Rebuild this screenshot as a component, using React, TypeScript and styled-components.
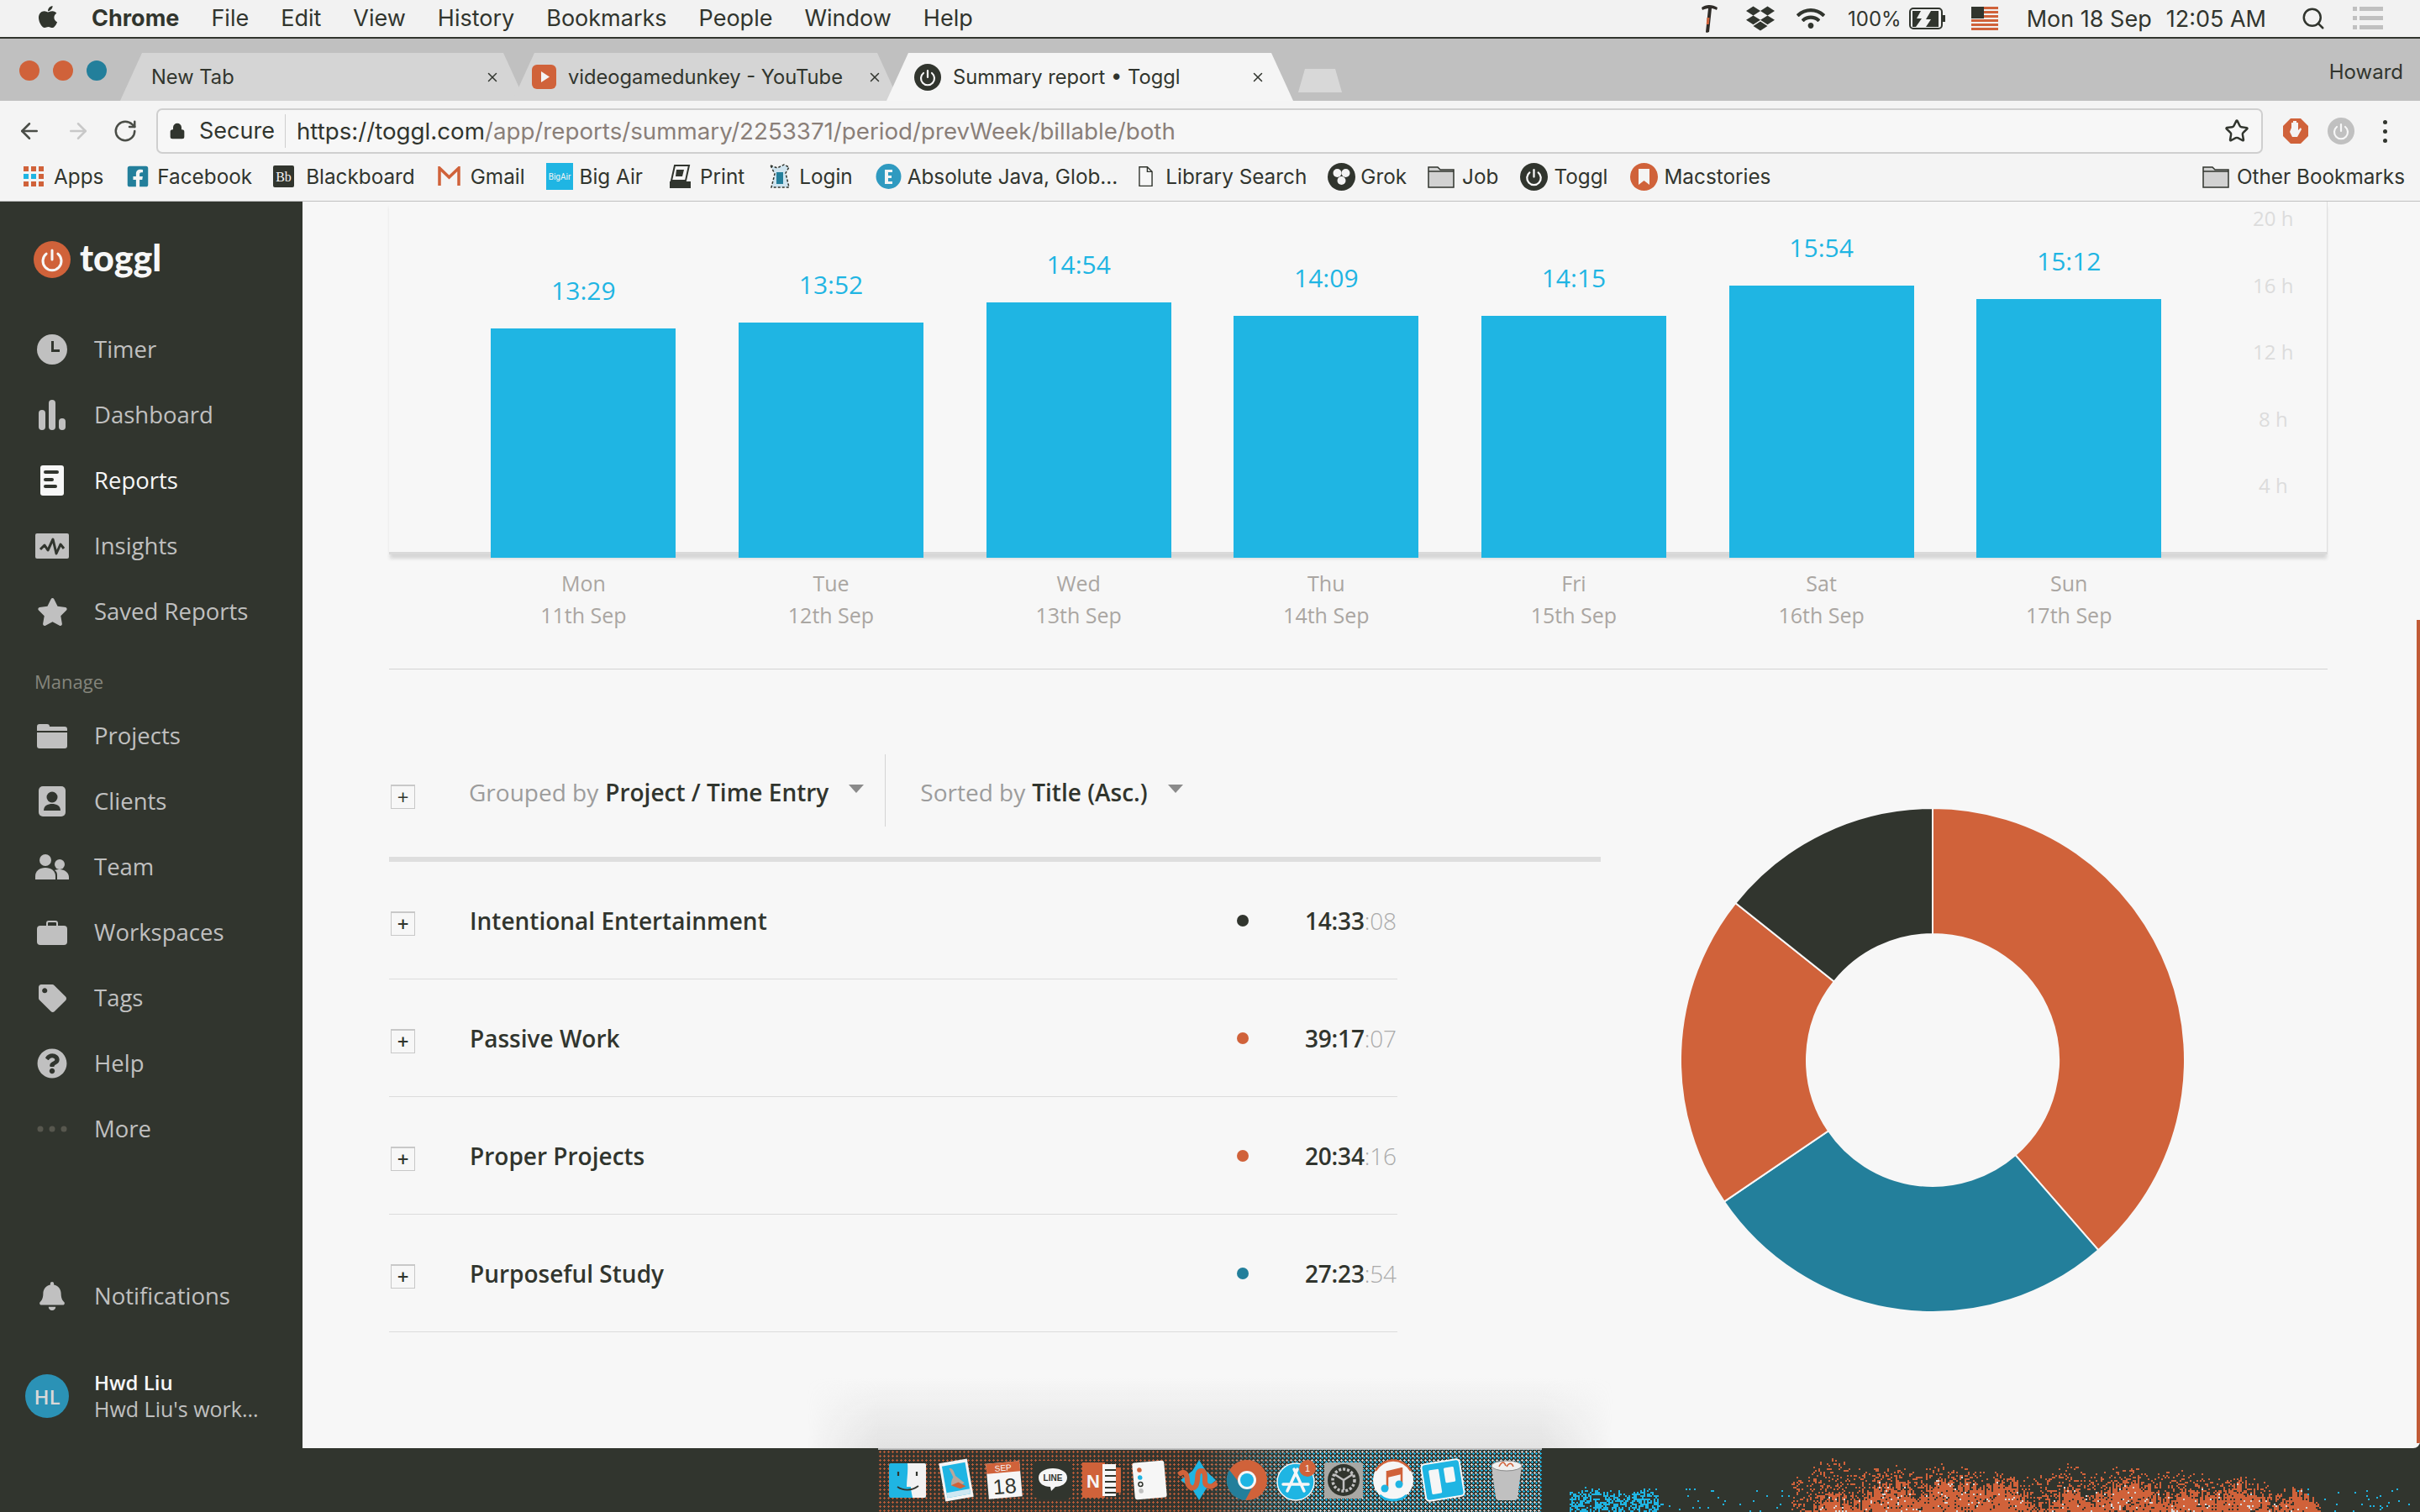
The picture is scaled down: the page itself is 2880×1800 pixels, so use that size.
import React from "react";
import styled, { createGlobalStyle } from "styled-components";
import {
  FaApple, FaBell, FaDropbox, FaFacebookSquare, FaQuestionCircle, FaStar, FaTag, FaWifi,
} from "react-icons/fa";
import { ArrowLeft, ArrowRight, Lock, RotateCw, Search, Star, X } from "lucide-react";

const DARK = "#31352e";
const ORANGE = "#d0623a";
const BLUE = "#1fb5e3";
const TEAL = "#237f9b";
const GREY = "#c0c0c0";
const PAPER = "#f7f7f7";

const GlobalStyle = createGlobalStyle`
  html, body { margin: 0; padding: 0; background: ${DARK}; }
  * { box-sizing: border-box; }
`;

const Screen = styled.div`
  width: 2880px;
  height: 1800px;
  display: flex;
  flex-direction: column;
  overflow: hidden;
  font-family: "Open Sans", sans-serif;
  background: ${DARK};
`;

/* ---- mac menu bar ---- */
const MenuBar = styled.div`
  height: 46px;
  flex: none;
  display: flex;
  align-items: center;
  background: #f2f2f2;
  border-bottom: 2px solid ${DARK};
  padding: 0 0 0 42px;
  font-family: Inter, sans-serif;
  font-size: 27px;
  color: ${DARK};
`;
const MenuItem = styled.span<{ $bold?: boolean }>`
  margin-right: 38px;
  font-weight: ${(p) => (p.$bold ? 700 : 400)};
  line-height: 44px;
`;
const AppleMark = styled.span`
  display: flex;
  width: 67px;
  font-size: 30px;
  margin-top: -4px;
`;
const Status = styled.div`
  margin-left: auto;
  display: flex;
  align-items: center;
  height: 44px;
  padding-right: 44px;
`;
const StatusIcon = styled.span<{ $gap: number }>`
  display: flex;
  align-items: center;
  margin-right: ${(p) => p.$gap}px;
`;
const StatusText = styled.span<{ $gap: number; $size?: number }>`
  margin-right: ${(p) => p.$gap}px;
  font-size: ${(p) => p.$size ?? 27}px;
  white-space: nowrap;
`;

/* ---- chrome tabs ---- */
const TabStrip = styled.div`
  height: 74px;
  flex: none;
  display: flex;
  align-items: flex-end;
  background: ${GREY};
  position: relative;
`;
const Lights = styled.div`
  width: 143px;
  height: 100%;
  flex: none;
  display: flex;
  align-items: center;
  gap: 16px;
  padding: 2px 0 0 23px;
`;
const Light = styled.span<{ $color: string }>`
  width: 24px;
  height: 24px;
  border-radius: 50%;
  background: ${(p) => p.$color};
`;
const Tab = styled.div<{ $width: number; $active?: boolean; $left: number; $right: number }>`
  width: ${(p) => p.$width}px;
  height: 57px;
  flex: none;
  display: flex;
  align-items: center;
  margin-right: -15px;
  padding: 0 ${(p) => p.$right}px 0 ${(p) => p.$left}px;
  background: ${(p) => (p.$active ? "#f5f5f5" : "#d5d5d5")};
  clip-path: polygon(26px 0, calc(100% - 26px) 0, 100% 100%, 0 100%);
  font-family: Inter, sans-serif;
  font-size: 23.7px;
  color: ${DARK};
  position: relative;
  z-index: ${(p) => (p.$active ? 2 : 1)};
`;
const TabTitle = styled.span`
  flex: 1;
  margin-left: 14px;
  white-space: nowrap;
`;
const PlainTabTitle = styled(TabTitle)`
  margin-left: 0;
`;
const NewTab = styled.div`
  width: 52px;
  height: 28px;
  margin: 0 0 10px 21px;
  background: #d8d8d8;
  clip-path: polygon(8px 0, calc(100% - 8px) 0, 100% 100%, 0 100%);
  flex: none;
`;
const Profile = styled.span`
  margin: 0 20px 20px auto;
  font-family: Inter, sans-serif;
  font-size: 24px;
  color: ${DARK};
`;

/* ---- address row ---- */
const AddressRow = styled.div`
  height: 63px;
  flex: none;
  display: flex;
  align-items: flex-start;
  background: #f4f4f4;
  padding: 9px 0 0 20px;
  color: ${DARK};
`;
const NavButton = styled.span<{ $muted?: boolean; $gap: number }>`
  height: 54px;
  display: flex;
  align-items: center;
  margin-right: ${(p) => p.$gap}px;
  color: ${(p) => (p.$muted ? "#c8c8c8" : "#4a4d47")};
`;
const AddressBar = styled.div`
  flex: 1;
  height: 54px;
  display: flex;
  align-items: center;
  background: ${PAPER};
  border: 2px solid #cfcfcf;
  border-radius: 7px;
  padding: 0 14px 0 13px;
  font-family: Inter, sans-serif;
  font-size: 27px;
`;
const SecureLabel = styled.span`
  margin-left: 16px;
  padding-right: 12px;
  border-right: 1px solid #cfcfcf;
  line-height: 40px;
`;
const Url = styled.span`
  margin-left: 13px;
  flex: 1;
  font-size: 27.7px;
  white-space: nowrap;
  color: #8a7f79;
`;
const UrlHost = styled.span`
  color: ${DARK};
`;
const Extensions = styled.div`
  width: 187px;
  height: 54px;
  flex: none;
  display: flex;
  align-items: center;
  padding-left: 23px;
  gap: 22px;
`;
const Kebab = styled.span`
  display: flex;
  flex-direction: column;
  gap: 6px;
  margin-left: 12px;
`;
const KebabDot = styled.span`
  width: 5px;
  height: 5px;
  border-radius: 50%;
  background: ${DARK};
`;

/* ---- bookmarks ---- */
const BookmarkRow = styled.div`
  height: 57px;
  flex: none;
  display: flex;
  align-items: center;
  background: #f4f4f4;
  border-bottom: 1px solid ${GREY};
  padding: 0 18px 2px 28px;
  font-family: Inter, sans-serif;
  font-size: 24.3px;
  color: ${DARK};
`;
const Bookmark = styled.span<{ $gap: number; $icon: number; $push?: boolean }>`
  display: flex;
  align-items: center;
  gap: ${(p) => p.$icon}px;
  margin-right: ${(p) => p.$gap}px;
  margin-left: ${(p) => (p.$push ? "auto" : 0)};
  white-space: nowrap;
`;

/* ---- page body ---- */
const Body = styled.div`
  flex: 1;
  display: flex;
  min-height: 0;
`;
const Sidebar = styled.aside`
  width: 360px;
  flex: none;
  display: flex;
  flex-direction: column;
  background: ${DARK};
  padding-bottom: 107px;
`;
const Logo = styled.div`
  display: flex;
  align-items: center;
  height: 44px;
  margin: 47px 0 46px 40px;
  gap: 11px;
`;
const LogoWord = styled.span`
  font-family: Lato, sans-serif;
  font-weight: 900;
  font-size: 43px;
  line-height: 44px;
  color: ${PAPER};
  margin-top: -5px;
`;
const NavRow = styled.div<{ $active?: boolean }>`
  height: 78px;
  flex: none;
  display: flex;
  align-items: center;
  padding-left: 42px;
  font-size: 27.5px;
  color: ${(p) => (p.$active ? PAPER : GREY)};
`;
const NavIcon = styled.span<{ $muted?: boolean }>`
  width: 40px;
  height: 40px;
  flex: none;
  display: flex;
  align-items: center;
  justify-content: center;
  margin-right: 30px;
  color: ${(p) => (p.$muted ? "#57574e" : "inherit")};
`;
const NavText = styled.span`
  margin-top: -2px;
`;
const ManageLabel = styled.div`
  padding: 32px 0 14px 41px;
  font-size: 22px;
  line-height: 24px;
  color: #85857c;
`;
const NotifyRow = styled(NavRow)`
  margin-top: auto;
  margin-bottom: 49px;
`;
const UserRow = styled.div`
  display: flex;
  align-items: center;
  height: 62px;
  padding-left: 30px;
  gap: 30px;
`;
const Avatar = styled.span`
  width: 52px;
  height: 52px;
  border-radius: 50%;
  background: #2b92b6;
  color: #d8d8d8;
  font-size: 24px;
  font-weight: 600;
  display: flex;
  align-items: center;
  justify-content: center;
  flex: none;
`;
const UserText = styled.div`
  margin-top: -3px;
`;
const UserName = styled.div`
  font-size: 24px;
  font-weight: 600;
  line-height: 32px;
  color: ${PAPER};
`;
const UserWork = styled.div`
  font-size: 25px;
  line-height: 30px;
  color: ${GREY};
  white-space: nowrap;
`;

const Main = styled.main`
  flex: 1;
  display: flex;
  flex-direction: column;
  min-width: 0;
`;
const Content = styled.div`
  height: 1484px;
  flex: none;
  background: ${PAPER};
  padding: 0 110px 0 103px;
  position: relative;
  overflow: hidden;
  border-bottom-right-radius: 8px;
`;
const ScrollMark = styled.div`
  position: absolute;
  right: 0;
  top: 498px;
  bottom: 6px;
  width: 4px;
  background: #c15b36;
`;
const DockShadow = styled.div`
  position: absolute;
  left: 600px;
  bottom: 0;
  width: 960px;
  height: 84px;
  background: linear-gradient(to bottom, rgba(200, 200, 200, 0), rgba(200, 200, 200, 0.42));
  mask-image: linear-gradient(to right, transparent, #000 9%, #000 91%, transparent);
`;

/* ---- chart ---- */
const Plot = styled.div`
  height: 420px;
  display: flex;
  align-items: flex-end;
  padding-left: 84px;
  border-right: 1px solid #dedede;
  box-shadow: inset 0 -3px 0 #dadada, 0 6px 4px -1px #d6d6d6;
`;
const BarColumn = styled.div`
  width: 294.67px;
  flex: none;
  display: flex;
  flex-direction: column;
  align-items: center;
  margin-bottom: -4px;
`;
const BarValue = styled.div`
  height: 40px;
  margin-bottom: 25px;
  font-size: 30px;
  line-height: 40px;
  color: ${BLUE};
`;
const Bar = styled.div<{ $height: number }>`
  width: 220px;
  height: ${(p) => p.$height}px;
  background: ${BLUE};
  position: relative;
`;
const AxisLabels = styled.div`
  align-self: flex-start;
  flex: 1;
  padding: 8px 12px 0 0;
  display: flex;
  flex-direction: column;
  align-items: center;
  gap: 55.5px;
  font-size: 24px;
  line-height: 24px;
  color: #dcdcdc;
`;
const AxisText = styled.span`
  margin-left: 44px;
`;
const DayRow = styled.div`
  display: flex;
  padding: 15px 0 0 84px;
  margin-bottom: 45px;
`;
const Day = styled.div`
  width: 294.67px;
  flex: none;
  text-align: center;
  font-size: 25px;
  line-height: 38px;
  color: #aaa6a2;
`;
const Rule = styled.div`
  height: 1px;
  background: #d4d4d4;
`;

/* ---- summary list ---- */
const Lower = styled.div`
  display: flex;
  align-items: flex-start;
`;
const ListColumn = styled.div`
  width: 1442px;
  flex: none;
  padding-top: 101px;
`;
const ListHead = styled.div`
  display: flex;
  align-items: flex-start;
  height: 128px;
  padding-bottom: 36px;
  border-bottom: 6px solid #dedede;
  font-size: 28px;
  color: #9c9c9c;
`;
const PlusBox = styled.span`
  width: 29px;
  height: 29px;
  flex: none;
  display: flex;
  align-items: center;
  justify-content: center;
  margin-left: 2px;
  border: 1px solid #c8c8c8;
  border-top-width: 2px;
  font-size: 24px;
  line-height: 24px;
  color: ${DARK};
`;
const HeadBox = styled(PlusBox)`
  margin-top: 36px;
`;
const Sorter = styled.div<{ $first?: boolean }>`
  height: 86px;
  display: flex;
  align-items: center;
  padding: 3px ${(p) => (p.$first ? 25 : 0)}px 0 ${(p) => (p.$first ? 64 : 41)}px;
  border-right: ${(p) => (p.$first ? "1px solid #d4d4d4" : "0")};
  white-space: nowrap;
`;
const SortValue = styled.strong`
  font-weight: 600;
  color: ${DARK};
  margin-left: 8px;
`;
const Caret = styled.span`
  width: 0;
  height: 0;
  margin: -8px 0 0 24px;
  border-left: 9px solid transparent;
  border-right: 9px solid transparent;
  border-top: 10px solid #8b8b8b;
`;
const Row = styled.div`
  width: 1200px;
  height: 140px;
  display: flex;
  align-items: center;
  border-bottom: 1px solid #dcdcdc;
  padding-top: 1px;
  font-size: 28px;
  font-weight: 600;
  color: ${DARK};
`;
const RowBox = styled(PlusBox)`
  margin-top: 6px;
`;
const RowTitle = styled.span`
  flex: 1;
  margin-left: 65px;
`;
const Dot = styled.span<{ $color: string }>`
  width: 14px;
  height: 14px;
  border-radius: 50%;
  background: ${(p) => p.$color};
  margin-right: 67px;
`;
const Time = styled.span`
  width: 110px;
  font-size: 28px;
  letter-spacing: -0.2px;
  white-space: nowrap;
`;
const Seconds = styled.span`
  font-weight: 300;
  color: #aaaaaa;
`;
const DonutWrap = styled.div`
  margin: 163px 0 0 93px;
  line-height: 0;
`;

/* ---- dock ---- */
const DockArea = styled.div`
  flex: 1;
  display: flex;
  background: ${DARK};
  min-height: 0;
`;
const Dock = styled.div`
  width: 790px;
  margin-left: 685px;
  flex: none;
  display: flex;
  align-items: flex-start;
  gap: 11.7px;
  padding: 11px 0 0 12px;
  border-top: 2px solid ${GREY};
  background-color: #34352e;
  background-image: radial-gradient(rgba(208, 98, 58, 0.85) 1px, transparent 1.2px);
  background-size: 5px 5px;
  position: relative;
  isolation: isolate;

  &::before {
    content: "";
    position: absolute;
    inset: 0 0 0 48%;
    z-index: -1;
    background-color: #33362f;
    background-image:
      radial-gradient(#d8d8d8 1px, transparent 1.2px),
      radial-gradient(${BLUE} 1px, transparent 1.2px);
    background-size: 5px 5px, 5px 5px;
    background-position: 0 0, 2px 2px;
    mask-image: linear-gradient(to right, transparent, #000 35%);
  }
`;
const TrashSlot = styled.span`
  margin-left: 25px;
`;
const WallpaperWrap = styled.div`
  margin-left: 25px;
  line-height: 0;
`;

const Bars = [
  { value: "13:29", height: 273, day: "Mon", date: "11th Sep" },
  { value: "13:52", height: 280, day: "Tue", date: "12th Sep" },
  { value: "14:54", height: 304, day: "Wed", date: "13th Sep" },
  { value: "14:09", height: 288, day: "Thu", date: "14th Sep" },
  { value: "14:15", height: 288, day: "Fri", date: "15th Sep" },
  { value: "15:54", height: 324, day: "Sat", date: "16th Sep" },
  { value: "15:12", height: 308, day: "Sun", date: "17th Sep" },
];

const Projects = [
  { name: "Intentional Entertainment", color: DARK, time: "14:33", sec: ":08" },
  { name: "Passive Work", color: ORANGE, time: "39:17", sec: ":07" },
  { name: "Proper Projects", color: ORANGE, time: "20:34", sec: ":16" },
  { name: "Purposeful Study", color: TEAL, time: "27:23", sec: ":54" },
];

// clockwise from the top, same order as the toggl pie
const Slices = [
  { hours: 39.285, color: ORANGE },
  { hours: 27.398, color: TEAL },
  { hours: 20.571, color: ORANGE },
  { hours: 14.552, color: DARK },
];

const polar = (r: number, deg: number) => {
  const a = (deg * Math.PI) / 180;
  return `${(302 + r * Math.sin(a)).toFixed(2)} ${(302 - r * Math.cos(a)).toFixed(2)}`;
};

const Donut = () => {
  const total = Slices.reduce((s, x) => s + x.hours, 0);
  let start = 0;
  return (
    <svg width="604" height="604" viewBox="0 0 604 604">
      {Slices.map((s) => {
        const end = start + (s.hours / total) * 360;
        const large = end - start > 180 ? 1 : 0;
        const d = `M${polar(300, start)}A300 300 0 ${large} 1 ${polar(300, end)}L${polar(150, end)}A150 150 0 ${large} 0 ${polar(150, start)}Z`;
        start = end;
        return <path key={s.hours} d={d} fill={s.color} stroke={PAPER} strokeWidth="2" />;
      })}
    </svg>
  );
};

const lerp = (pts: number[][], x: number) => {
  for (let i = 1; i < pts.length; i++) {
    if (x <= pts[i][0]) {
      const [x0, y0] = pts[i - 1];
      const [x1, y1] = pts[i];
      return y0 + ((y1 - y0) * (x - x0)) / (x1 - x0);
    }
  }
  return 999;
};

const SOLID = [[510, 215], [580, 170], [640, 145], [700, 150], [760, 140], [840, 150], [880, 205], [950, 190], [1000, 160], [1080, 140], [1120, 190], [1200, 170], [1240, 150], [1280, 200], [1350, 180], [1390, 230]];
const SPARSE = [[440, 100], [530, 65], [600, 90], [680, 75], [780, 95], [830, 120], [880, 110], [930, 90], [1010, 85], [1100, 95], [1180, 115], [1240, 125], [1340, 155], [1390, 210]];

const Wallpaper = () => {
  // flames in the desktop picture, sampled on a 2px grid like the dithered original
  let seed = 23;
  const rnd = () => {
    seed = (seed * 16807) % 2147483647;
    return seed / 2147483647;
  };
  let orange = "";
  let blue = "";
  let pale = "";
  for (let x = 0; x < 1020; x += 2) {
    const zx = (x + 20) * 1.508;
    const wobble = (rnd() - 0.5) * 60 + 22 * Math.sin(zx / 17);
    for (let y = 0; y < 76; y += 2) {
      const zy = (y + 4) * 3;
      const cell = `M${x} ${y}h2v2h-2z`;
      const inOrange = zx > 440 && zx < 1390;
      if (inOrange && zy > lerp(SOLID, zx) + wobble) {
        const r = rnd();
        if (r < 0.05) pale += cell;
        else if (r < 0.9) orange += cell;
      } else if (inOrange && zy > lerp(SPARSE, zx) + wobble * 0.5) {
        if (rnd() < 0.24) orange += cell;
      } else if (zx > 40 && zx < 200 && zy > 165 + wobble * 0.4) {
        if (rnd() < 0.55) blue += cell;
      } else if (((zx >= 200 && zx < 440) || zx >= 1280) && zy > 150) {
        if (rnd() < 0.035) blue += cell;
      }
    }
  }
  return (
    <svg width="1020" height="76" viewBox="0 0 1020 76">
      <path d={blue} fill={BLUE} />
      <path d={orange} fill={ORANGE} />
      <path d={pale} fill="#d8d8d8" />
    </svg>
  );
};

const PowerGlyph = ({ size, bg, fg }: { size: number; bg: string; fg: string }) => (
  <svg width={size} height={size} viewBox="0 0 32 32">
    <circle cx="16" cy="16" r="16" fill={bg} />
    <path d="M11 11a8 8 0 1 0 10 0" fill="none" stroke={fg} strokeWidth="2.2" strokeLinecap="round" />
    <path d="M16 8v8" stroke={fg} strokeWidth="2.2" strokeLinecap="round" />
  </svg>
);

const Hammer = () => (
  <svg width="22" height="34" viewBox="0 0 22 34">
    <path d="M2 4C7 0 15 0 21 4l-1 3c-2-1-4-2-6-2l-3 28-3 1-1-1 3-28C8 5 5 6 3 7Z" fill="#2f2c28" />
    <path d="M8.500 16h3l-.8 8h-3Z" fill={ORANGE} />
  </svg>
);

const Battery = () => (
  <svg width="44" height="26" viewBox="0 0 44 26">
    <rect x="1" y="1" width="38" height="24" rx="4" fill="none" stroke={DARK} strokeWidth="2" />
    <rect x="40" y="9" width="3" height="8" fill={DARK} />
    <path d="M4 4h10L9 13h6l-7 10H4ZM20 4h15v19H20l6-9h-6l6-10Z" fill={DARK} />
  </svg>
);

const Flag = () => (
  <svg width="32" height="28" viewBox="0 0 32 28">
    <rect width="32" height="28" fill="#f1f1f1" />
    {[0, 5, 10, 15, 20, 25].map((y) => (
      <rect key={y} y={y} width="32" height="3" fill={ORANGE} />
    ))}
    <rect width="15" height="14" fill={DARK} />
  </svg>
);

const ListLines = () => (
  <svg width="36" height="32" viewBox="0 0 36 32" fill={GREY}>
    <rect x="0" y="2" width="5" height="5" />
    <rect x="0" y="13" width="5" height="5" />
    <rect x="0" y="24" width="5" height="5" />
    <rect x="8" y="2" width="28" height="5" />
    <rect x="8" y="13" width="28" height="5" />
    <rect x="8" y="24" width="28" height="5" />
  </svg>
);

const StopHand = () => (
  <svg width="32" height="32" viewBox="0 0 32 32">
    <path d="M10 1h12l9 9v12l-9 9H10l-9-9V10Z" fill={ORANGE} />
    <path d="M11 12V6h2v6-8h2v8-8h2v8-6h2v9l3-3 1 2-5 9h-6l-3-6Z" fill="#f4f4f4" />
  </svg>
);

const YoutubeIcon = () => (
  <svg width="29" height="29" viewBox="0 0 29 29">
    <rect width="29" height="29" rx="6" fill={ORANGE} />
    <path d="M11 8l10 6.500-10 6.500Z" fill="#f4f4f4" />
  </svg>
);

const AppsGrid = () => (
  <svg width="24" height="24" viewBox="0 0 24 24">
    {[0, 9, 18].map((y) =>
      [0, 9, 18].map((x) => (
        <rect key={`${x}-${y}`} x={x} y={y} width="6" height="6" fill={y === 9 && x !== 18 ? BLUE : ORANGE} />
      )),
    )}
  </svg>
);

const FolderIcon = () => (
  <svg width="32" height="28" viewBox="0 0 32 28">
    <path d="M1 3h11l3 3h16v21H1Z" fill="#d2d2d2" stroke={DARK} strokeWidth="1.500" />
    <path d="M1 8h30" stroke={DARK} strokeWidth="1.500" />
  </svg>
);

const GmailIcon = () => (
  <svg width="27" height="24" viewBox="0 0 27 24">
    <path d="M2 23V2l11.500 11L25 2v21" fill="none" stroke={ORANGE} strokeWidth="3.500" />
  </svg>
);

const BlackboardIcon = () => (
  <svg width="25" height="26" viewBox="0 0 25 26">
    <rect width="25" height="26" rx="2" fill={DARK} />
    <text x="12.500" y="19" fontSize="16" fontFamily="Liberation Serif, serif" fill="#f4f4f4" textAnchor="middle">Bb</text>
  </svg>
);

const BigAirIcon = () => (
  <svg width="32" height="32" viewBox="0 0 32 32">
    <rect width="32" height="32" fill={BLUE} />
    <text x="16" y="20" fontSize="10" fontFamily="Roboto, sans-serif" fill="#f4f4f4" textAnchor="middle">BigAir</text>
  </svg>
);

const PrintIcon = () => (
  <svg width="27" height="30" viewBox="0 0 27 30">
    <path d="M7 2h17l-4 18H3Z" fill="#f4f4f4" stroke={DARK} strokeWidth="2" />
    <path d="M9 7h9l-2 8H8Z" fill={DARK} />
    <path d="M1 21h25v8H1Z" fill={DARK} />
  </svg>
);

const LoginIcon = () => (
  <svg width="30" height="32" viewBox="0 0 30 32">
    <path d="M4 3l8 3 8-4 6 3-4 7 4 17H5l4-16Z" fill="#cfe4ef" stroke={DARK} strokeWidth="1.500" strokeDasharray="3 2" />
    <path d="M11 11h8v14h-8Z" fill={TEAL} />
  </svg>
);

const AbsoluteIcon = () => (
  <svg width="31" height="32" viewBox="0 0 31 32">
    <circle cx="15.500" cy="16" r="15" fill="#2f9ac0" />
    <path d="M11 8h9v3h-5v4h4v3h-4v4h5v3h-9Z" fill="#f4f4f4" />
  </svg>
);

const DocIcon = () => (
  <svg width="17" height="26" viewBox="0 0 18 26">
    <path d="M1 1h10l6 6v18H1Z M11 1v6h6" fill="#f7f7f7" stroke={DARK} strokeWidth="1.500" />
  </svg>
);

const GrokIcon = () => (
  <svg width="33" height="33" viewBox="0 0 33 33">
    <circle cx="16.500" cy="16.500" r="16.500" fill={DARK} />
    <circle cx="11.500" cy="12" r="5" fill="#f4f4f4" />
    <circle cx="21.500" cy="12" r="5" fill="#f4f4f4" />
    <circle cx="16.500" cy="21" r="5" fill="#f4f4f4" />
  </svg>
);

const MacstoriesIcon = () => (
  <svg width="33" height="33" viewBox="0 0 33 33">
    <circle cx="16.500" cy="16.500" r="16.500" fill={ORANGE} />
    <path d="M10 7h13v19l-6.500-5-6.500 5Z" fill="#f4f4f4" />
  </svg>
);

const ClockIcon = () => (
  <svg width="36" height="36" viewBox="0 0 36 36">
    <circle cx="18" cy="18" r="18" fill={GREY} />
    <path d="M17 8h3v10h7v3H17Z" fill={DARK} />
  </svg>
);

const DashIcon = () => (
  <svg width="34" height="36" viewBox="0 0 34 36" fill={GREY}>
    <rect x="1" y="12" width="8" height="24" rx="4" />
    <rect x="13" y="0" width="8" height="36" rx="4" />
    <rect x="25" y="22" width="8" height="14" rx="4" />
  </svg>
);

const ReportIcon = () => (
  <svg width="28" height="36" viewBox="0 0 28 36">
    <rect width="28" height="36" rx="3" fill={PAPER} />
    <rect x="4" y="6" width="18" height="4" rx="2" fill={DARK} />
    <rect x="4" y="15" width="12" height="4" rx="2" fill={DARK} />
    <rect x="4" y="23" width="16" height="4" rx="2" fill={DARK} />
  </svg>
);

const InsightIcon = () => (
  <svg width="40" height="30" viewBox="0 0 40 30">
    <rect width="40" height="30" rx="2" fill={GREY} />
    <path d="M6 19l5-5 4 6 6-13 4 17 5-11 4 5" fill="none" stroke={DARK} strokeWidth="3" strokeLinejoin="round" />
  </svg>
);

const FolderNav = () => (
  <svg width="36" height="30" viewBox="0 0 36 30" fill={GREY}>
    <path d="M0 4a3 3 0 0 1 3-3h9a3 3 0 0 1 3 3h18a3 3 0 0 1 3 3v2H0Z" />
    <path d="M0 11h36v16a3 3 0 0 1-3 3H3a3 3 0 0 1-3-3Z" />
  </svg>
);

const ClientIcon = () => (
  <svg width="32" height="36" viewBox="0 0 32 36">
    <rect width="32" height="36" rx="5" fill={GREY} />
    <circle cx="16" cy="13" r="6.500" fill={DARK} />
    <path d="M6 29c0-6 5-8 10-8s10 2 10 8Z" fill={DARK} />
  </svg>
);

const TeamIcon = () => (
  <svg width="40" height="30" viewBox="0 0 40 30" fill={GREY}>
    <circle cx="12" cy="7" r="7" />
    <path d="M0 30v-4c0-6 5-10 12-10s12 4 12 10v4Z" />
    <circle cx="29" cy="12" r="6" />
    <path d="M26 30v-5c0-3-1-5-3-6 2-1 4-1 6-1 6 0 11 4 11 9v3Z" />
  </svg>
);

const BriefcaseNav = () => (
  <svg width="36" height="30" viewBox="0 0 36 30" fill={GREY}>
    <path d="M11 7V4a3 3 0 0 1 3-3h8a3 3 0 0 1 3 3v3h-2V4a1 1 0 0 0-1-1h-8a1 1 0 0 0-1 1v3Z" />
    <rect y="7" width="36" height="23" rx="4" />
  </svg>
);

const DockFrame = ({ children }: { children: React.ReactNode }) => (
  <svg width="46" height="50" viewBox="0 0 46 50" overflow="visible">
    {children}
  </svg>
);

const DockIcons = [
  <DockFrame key="finder">
    <rect x="1" y="5" width="44" height="41" rx="2" fill={BLUE} />
    <path d="M23 5h20a2 2 0 0 1 2 2v37a2 2 0 0 1-2 2H29c-1-5-2-9-2-13h-5c0-8 2-19 1-28Z" fill="#f2f2f2" />
    <path d="M11 33c7 5 17 5 25-1" fill="none" stroke={DARK} strokeWidth="1.800" />
    <path d="M12 15v5M34 15v5" stroke={DARK} strokeWidth="2.200" />
  </DockFrame>,
  <DockFrame key="preview">
    <g transform="rotate(-10 23 25)">
      <rect x="6" y="2" width="34" height="46" fill="#f4f4f4" />
      <rect x="9" y="6" width="28" height="38" fill={BLUE} />
      <path d="M17 10c4-1 5 4 6 10l9 10-6 3-10-3c1-6 3-7 4-9Z" fill="#b9a69a" />
      <path d="M16 30l9-2 8 6-7 2Z" fill={ORANGE} />
      <rect x="9" y="38" width="28" height="6" fill="#cfe8f2" />
    </g>
  </DockFrame>,
  <DockFrame key="calendar">
    <g transform="rotate(-5 23 25)">
      <rect x="3" y="4" width="40" height="42" fill="#f6f6f6" />
      <rect x="3" y="4" width="40" height="12" fill={ORANGE} />
      <text x="23" y="14" fontSize="10" fontFamily="Liberation Sans, sans-serif" fill="#f6f6f6" textAnchor="middle">SEP</text>
      <text x="23" y="41" fontSize="25" fontFamily="Liberation Sans, sans-serif" fill={DARK} textAnchor="middle">18</text>
    </g>
  </DockFrame>,
  <DockFrame key="line">
    <rect y="2" width="46" height="46" rx="8" fill={DARK} />
    <path d="M6 22c0-7 8-11 17-11s17 4 17 11-7 11-14 11l-5 5-1-5C12 33 6 29 6 22Z" fill="#f6f6f6" />
    <text x="23" y="26" fontSize="10" fontWeight="700" fontFamily="Liberation Sans, sans-serif" fill={DARK} textAnchor="middle">LINE</text>
  </DockFrame>,
  <DockFrame key="onenote">
    <rect x="0" y="4" width="27" height="42" fill={ORANGE} />
    <rect x="24" y="6" width="16" height="38" fill="#f6f6f6" />
    <rect x="40" y="10" width="6" height="30" fill={ORANGE} />
    <path d="M27 13h13M27 20h13M27 27h13M27 34h13M27 40h13" stroke={DARK} strokeWidth="1.800" />
    <text x="13" y="34" fontSize="22" fontWeight="700" fontFamily="Liberation Sans, sans-serif" fill="#f6f6f6" textAnchor="middle">N</text>
  </DockFrame>,
  <DockFrame key="reminders">
    <g transform="rotate(-5 23 25)">
      <rect x="4" y="3" width="38" height="44" rx="3" fill="#f6f6f6" />
      <circle cx="12" cy="12" r="2.800" fill={ORANGE} />
      <circle cx="12" cy="21" r="2.800" fill={BLUE} />
      <circle cx="12" cy="29" r="2.500" fill="none" stroke={DARK} strokeWidth="1.500" />
      <circle cx="12" cy="37" r="2.800" fill={GREY} />
    </g>
  </DockFrame>,
  <DockFrame key="snake">
    <path d="M24 1l8 13 12 11-12 11-8 13-8-13L2 25l14-11Z" fill={BLUE} />
    <path d="M2 17c6-4 8 3 8 9s6 12 10 6 0-17 6-18 5 8 5 13 7 8 12 3" fill="none" stroke={ORANGE} strokeWidth="6" strokeLinecap="round" />
  </DockFrame>,
  <DockFrame key="chrome">
    <circle cx="23" cy="25" r="24" fill={ORANGE} />
    <path d="M2 13a24 24 0 0 0 19 36l8-15-13-3Z" fill={TEAL} />
    <circle cx="23" cy="25" r="11" fill="#f6f6f6" />
    <circle cx="23" cy="25" r="8" fill={BLUE} />
  </DockFrame>,
  <DockFrame key="appstore">
    <circle cx="23" cy="27" r="22" fill={BLUE} stroke="#f6f6f6" strokeWidth="1.500" />
    <path d="M25 12 13 38M21 12l12 26M8 30h30" stroke="#f6f6f6" strokeWidth="3.500" strokeLinecap="round" />
    <circle cx="37" cy="11" r="10" fill={ORANGE} />
    <text x="37" y="15" fontSize="11" fontFamily="Liberation Sans, sans-serif" fill="#f6f6f6" textAnchor="middle">1</text>
  </DockFrame>,
  <DockFrame key="prefs">
    <rect x="0" y="4" width="46" height="43" rx="3" fill="#a8a8a4" />
    <circle cx="23" cy="25" r="19" fill={DARK} />
    <circle cx="23" cy="25" r="13" fill="none" stroke={GREY} strokeWidth="3.500" strokeDasharray="3 2" />
    <circle cx="23" cy="25" r="10" fill={DARK} />
    <path d="M23 25 12 18M23 25l11-7M23 25v12" stroke={GREY} strokeWidth="2.500" />
  </DockFrame>,
  <DockFrame key="itunes">
    <circle cx="24" cy="25" r="24" fill="#f6f6f6" />
    <path d="M3 14A24 24 0 0 1 45 14" fill="none" stroke={ORANGE} strokeWidth="2.500" />
    <path d="M8 43A24 24 0 0 0 40 43" fill="none" stroke={BLUE} strokeWidth="3" />
    <path d="M17 14l17-4v8l-17 4Z" fill={ORANGE} />
    <path d="M17 14v21M34 10v20" stroke={ORANGE} strokeWidth="2.500" />
    <circle cx="14" cy="35" r="4.500" fill={BLUE} />
    <circle cx="31" cy="30" r="4.500" fill={BLUE} />
  </DockFrame>,
  <DockFrame key="trello">
    <g transform="rotate(-9 25 25)">
      <rect x="2" y="3" width="46" height="44" rx="4" fill={BLUE} stroke="#f6f6f6" strokeWidth="2" />
      <rect x="10" y="11" width="12" height="29" rx="1.500" fill="#f6f6f6" />
      <rect x="28" y="11" width="12" height="18" rx="1.500" fill="#f6f6f6" />
    </g>
  </DockFrame>,
];

const Trash = () => (
  <svg width="38" height="50" viewBox="0 0 38 50">
    <path d="M1 8h36l-5 38a4 4 0 0 1-4 3H10a4 4 0 0 1-4-3Z" fill={GREY} />
    <ellipse cx="19" cy="8" rx="18" ry="6" fill="#f0f0f0" stroke="#8a8a8a" />
    <path d="M10 9c3-6 6-7 8-1M19 9c3-5 6-5 8 0" stroke={ORANGE} strokeWidth="1.500" fill="none" />
  </svg>
);

const NavTop = [
  { label: "Timer", icon: <ClockIcon /> },
  { label: "Dashboard", icon: <DashIcon /> },
  { label: "Reports", icon: <ReportIcon />, active: true },
  { label: "Insights", icon: <InsightIcon /> },
  { label: "Saved Reports", icon: <FaStar size={37} /> },
];

const NavManage = [
  { label: "Projects", icon: <FolderNav /> },
  { label: "Clients", icon: <ClientIcon /> },
  { label: "Team", icon: <TeamIcon /> },
  { label: "Workspaces", icon: <BriefcaseNav /> },
  { label: "Tags", icon: <FaTag size={33} /> },
  { label: "Help", icon: <FaQuestionCircle size={36} /> },
];

const MoreDots = () => (
  <svg width="40" height="8" viewBox="0 0 40 8" fill="#57574e">
    <circle cx="6" cy="4" r="3.500" />
    <circle cx="20" cy="4" r="3.500" />
    <circle cx="34" cy="4" r="3.500" />
  </svg>
);

export default function App() {
  return (
    <Screen>
      <GlobalStyle />
      <MenuBar>
        <AppleMark><FaApple /></AppleMark>
        <MenuItem $bold>Chrome</MenuItem>
        {["File", "Edit", "View", "History", "Bookmarks", "People", "Window", "Help"].map((m) => (
          <MenuItem key={m}>{m}</MenuItem>
        ))}
        <Status>
          <StatusIcon $gap={33}><Hammer /></StatusIcon>
          <StatusIcon $gap={26}><FaDropbox size={34} /></StatusIcon>
          <StatusIcon $gap={27}><FaWifi size={34} /></StatusIcon>
          <StatusText $gap={9} $size={24}>100%</StatusText>
          <StatusIcon $gap={30}><Battery /></StatusIcon>
          <StatusIcon $gap={34}><Flag /></StatusIcon>
          <StatusText $gap={17}>Mon 18 Sep</StatusText>
          <StatusText $gap={41}>12:05 AM</StatusText>
          <StatusIcon $gap={32}><Search size={30} /></StatusIcon>
          <StatusIcon $gap={0}><ListLines /></StatusIcon>
        </Status>
      </MenuBar>

      <TabStrip>
        <Lights>
          <Light $color={ORANGE} />
          <Light $color={ORANGE} />
          <Light $color={TEAL} />
        </Lights>
        <Tab $width={482} $left={37} $right={30}>
          <PlainTabTitle>New Tab</PlainTabTitle>
          <X size={18} />
        </Tab>
        <Tab $width={460} $left={23} $right={20}>
          <YoutubeIcon />
          <TabTitle>videogamedunkey - YouTube</TabTitle>
          <X size={18} />
        </Tab>
        <Tab $active $width={484} $left={33} $right={33}>
          <PowerGlyph size={32} bg={DARK} fg={PAPER} />
          <TabTitle>Summary report • Toggl</TabTitle>
          <X size={18} />
        </Tab>
        <NewTab />
        <Profile>Howard</Profile>
      </TabStrip>

      <AddressRow>
        <NavButton $gap={28}><ArrowLeft size={30} /></NavButton>
        <NavButton $gap={26} $muted><ArrowRight size={30} /></NavButton>
        <NavButton $gap={22}><RotateCw size={30} /></NavButton>
        <AddressBar>
          <Lock size={20} fill={DARK} />
          <SecureLabel>Secure</SecureLabel>
          <Url>
            <UrlHost>https://toggl.com</UrlHost>/app/reports/summary/2253371/period/prevWeek/billable/both
          </Url>
          <Star size={30} strokeWidth={2} />
        </AddressBar>
        <Extensions>
          <StopHand />
          <PowerGlyph size={32} bg={GREY} fg={PAPER} />
          <Kebab><KebabDot /><KebabDot /><KebabDot /></Kebab>
        </Extensions>
      </AddressRow>

      <BookmarkRow>
        <Bookmark $gap={27} $icon={12}><AppsGrid />Apps</Bookmark>
        <Bookmark $gap={25} $icon={9}><FaFacebookSquare size={28} color={TEAL} />Facebook</Bookmark>
        <Bookmark $gap={27} $icon={14}><BlackboardIcon />Blackboard</Bookmark>
        <Bookmark $gap={25} $icon={12}><GmailIcon />Gmail</Bookmark>
        <Bookmark $gap={31} $icon={8}><BigAirIcon />Big Air</Bookmark>
        <Bookmark $gap={27} $icon={10}><PrintIcon />Print</Bookmark>
        <Bookmark $gap={27} $icon={8}><LoginIcon />Login</Bookmark>
        <Bookmark $gap={25} $icon={7}><AbsoluteIcon />Absolute Java, Glob...</Bookmark>
        <Bookmark $gap={25} $icon={15}><DocIcon />Library Search</Bookmark>
        <Bookmark $gap={25} $icon={6}><GrokIcon />Grok</Bookmark>
        <Bookmark $gap={26} $icon={9}><FolderIcon />Job</Bookmark>
        <Bookmark $gap={27} $icon={7}><PowerGlyph size={33} bg={DARK} fg={PAPER} />Toggl</Bookmark>
        <Bookmark $gap={0} $icon={7}><MacstoriesIcon />Macstories</Bookmark>
        <Bookmark $gap={0} $icon={9} $push><FolderIcon />Other Bookmarks</Bookmark>
      </BookmarkRow>

      <Body>
        <Sidebar>
          <Logo>
            <PowerGlyph size={44} bg={ORANGE} fg={PAPER} />
            <LogoWord>toggl</LogoWord>
          </Logo>
          {NavTop.map((n) => (
            <NavRow key={n.label} $active={n.active}>
              <NavIcon>{n.icon}</NavIcon>
              <NavText>{n.label}</NavText>
            </NavRow>
          ))}
          <ManageLabel>Manage</ManageLabel>
          {NavManage.map((n) => (
            <NavRow key={n.label}>
              <NavIcon>{n.icon}</NavIcon>
              <NavText>{n.label}</NavText>
            </NavRow>
          ))}
          <NavRow>
            <NavIcon $muted><MoreDots /></NavIcon>
            <NavText>More</NavText>
          </NavRow>
          <NotifyRow>
            <NavIcon><FaBell size={34} /></NavIcon>
            <NavText>Notifications</NavText>
          </NotifyRow>
          <UserRow>
            <Avatar>HL</Avatar>
            <UserText>
              <UserName>Hwd Liu</UserName>
              <UserWork>Hwd Liu's work...</UserWork>
            </UserText>
          </UserRow>
        </Sidebar>

        <Main>
          <Content>
            <Plot>
              {Bars.map((b) => (
                <BarColumn key={b.day}>
                  <BarValue>{b.value}</BarValue>
                  <Bar $height={b.height} />
                </BarColumn>
              ))}
              <AxisLabels>
                {["20 h", "16 h", "12 h", "8 h", "4 h"].map((t) => (
                  <AxisText key={t}>{t}</AxisText>
                ))}
              </AxisLabels>
            </Plot>
            <DayRow>
              {Bars.map((b) => (
                <Day key={b.day}>
                  {b.day}
                  <br />
                  {b.date}
                </Day>
              ))}
            </DayRow>
            <Rule />
            <Lower>
              <ListColumn>
                <ListHead>
                  <HeadBox>+</HeadBox>
                  <Sorter $first>
                    Grouped by<SortValue>Project / Time Entry</SortValue>
                    <Caret />
                  </Sorter>
                  <Sorter>
                    Sorted by<SortValue>Title (Asc.)</SortValue>
                    <Caret />
                  </Sorter>
                </ListHead>
                {Projects.map((p) => (
                  <Row key={p.name}>
                    <RowBox>+</RowBox>
                    <RowTitle>{p.name}</RowTitle>
                    <Dot $color={p.color} />
                    <Time>
                      {p.time}
                      <Seconds>{p.sec}</Seconds>
                    </Time>
                  </Row>
                ))}
              </ListColumn>
              <DonutWrap>
                <Donut />
              </DonutWrap>
            </Lower>
            <DockShadow />
            <ScrollMark />
          </Content>
          <DockArea>
            <Dock>
              {DockIcons}
              <TrashSlot><Trash /></TrashSlot>
            </Dock>
            <WallpaperWrap>
              <Wallpaper />
            </WallpaperWrap>
          </DockArea>
        </Main>
      </Body>
    </Screen>
  );
}
